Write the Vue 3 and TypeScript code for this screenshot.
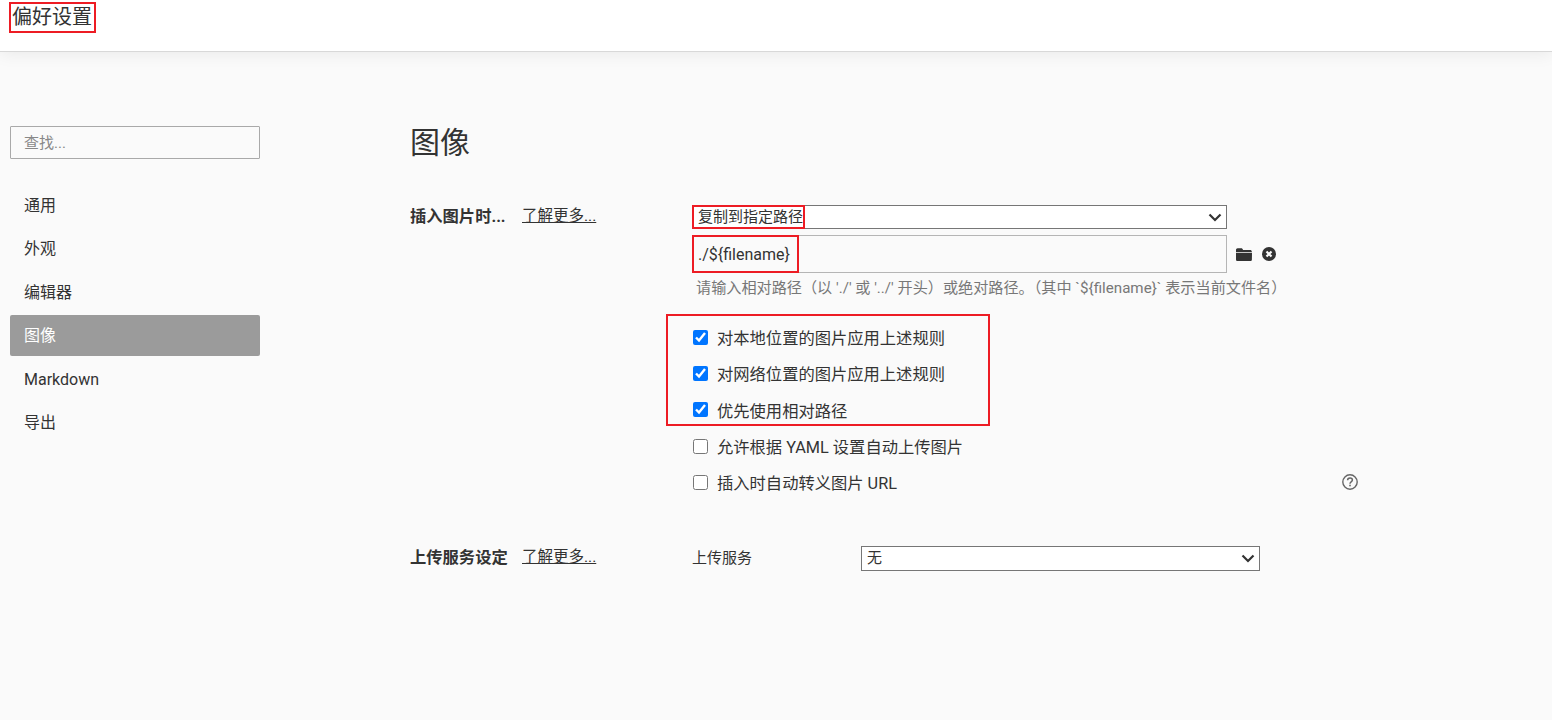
<template>
  <div class="page">
    <header class="topbar">
      <h1 class="title">偏好设置</h1>
    </header>
    <div class="content">
      <aside class="sidebar">
        <input class="search" type="text" placeholder="查找..." />
        <nav class="nav">
          <a v-for="item in navItems" :key="item" class="nav-item" :class="{ active: item === '图像' }">{{ item }}</a>
        </nav>
      </aside>
      <main class="main">
        <h2 class="heading">图像</h2>
        <section class="group first">
          <div class="group-label">
            <span class="label-text">插入图片时...</span>
            <a class="more">了解更多...</a>
          </div>
          <div class="group-body">
            <div class="marked-select">
              <select class="select path-select">
                <option>复制到指定路径</option>
              </select>
              <span class="mark mark-select"></span>
            </div>
            <div class="path-row">
              <div class="path-input-wrap">
                <input class="path-input" type="text" value="./${filename}" />
                <span class="mark mark-input"></span>
              </div>
              <svg class="icon-folder" viewBox="0 0 16 13" width="16" height="13">
                <path d="M0 2C0 1 .7.3 1.6.3h3.6c.8 0 1.2.5 1.5 1l.4.7h7.1c.9 0 1.6.7 1.6 1.6V4H0V2z" fill="#333" />
                <path d="M0 4.8h16l-.1 6.6c0 .9-.7 1.6-1.6 1.6H1.6C.7 13 0 12.3 0 11.4V4.8z" fill="#333" />
              </svg>
              <svg class="icon-clear" viewBox="0 0 14 14" width="14" height="14">
                <circle cx="7" cy="7" r="7" fill="#333" />
                <path d="M4.5 4.5l5 5M9.5 4.5l-5 5" stroke="#fafafa" stroke-width="2.2" fill="none" />
              </svg>
            </div>
            <p class="hint">请输入相对路径（以 './' 或 '../' 开头）或绝对路径。（其中 `${filename}` 表示当前文件名）</p>
            <div class="checks">
              <div class="checks-marked">
                <label v-for="c in markedChecks" :key="c" class="check">
                  <input type="checkbox" checked />
                  <span>{{ c }}</span>
                </label>
              </div>
              <label class="check plain">
                <input type="checkbox" />
                <span>允许根据 YAML 设置自动上传图片</span>
              </label>
              <label class="check plain">
                <input type="checkbox" />
                <span>插入时自动转义图片 URL</span>
                <svg class="icon-help" viewBox="0 0 16 16" width="16" height="16">
                  <circle cx="8" cy="8" r="7.2" fill="none" stroke="#666" stroke-width="1.4" />
                  <path d="M5.6 6.3c0-1.5 1.1-2.3 2.4-2.3s2.4.8 2.4 2.1c0 1.9-2.4 1.8-2.4 3.6" fill="none" stroke="#666" stroke-width="1.5" />
                  <rect x="7.2" y="10.7" width="1.6" height="1.6" fill="#666" />
                </svg>
              </label>
            </div>
          </div>
        </section>
        <section class="group second">
          <div class="group-label">
            <span class="label-text">上传服务设定</span>
            <a class="more">了解更多...</a>
          </div>
          <div class="service-row">
            <span class="service-label">上传服务</span>
            <select class="select service-select">
              <option>无</option>
            </select>
          </div>
        </section>
      </main>
    </div>
  </div>
</template>

<script setup lang="ts">
const navItems: string[] = ['通用', '外观', '编辑器', '图像', 'Markdown', '导出'];
const markedChecks: string[] = ['对本地位置的图片应用上述规则', '对网络位置的图片应用上述规则', '优先使用相对路径'];
</script>

<style>
html,
body {
  margin: 0;
  background: #fafafa;
}
</style>

<style scoped>
.page {
  height: 720px;
  overflow: hidden;
  background: #fafafa;
  color: #333;
  font-family: Roboto, "Noto Sans CJK SC", sans-serif;
  font-size: 16px;
}

.topbar {
  height: 52px;
  box-sizing: border-box;
  padding: 2px 0 0 9px;
  background: #fff;
  border-bottom: 1px solid #d8d8d8;
  box-shadow: 0 1px 18px rgba(0, 0, 0, 0.08);
  position: relative;
}

.title {
  display: inline-block;
  margin: 0;
  box-sizing: border-box;
  width: 87px;
  height: 31px;
  padding-left: 1px;
  border: 2px solid #ed1c24;
  font-size: 20px;
  font-weight: 400;
  line-height: 27px;
  white-space: nowrap;
}

.content {
  display: flex;
}

.sidebar {
  width: 250px;
  flex-shrink: 0;
  margin: 74px 0 0 10px;
}

.search {
  display: block;
  box-sizing: border-box;
  width: 250px;
  height: 33px;
  padding: 0 13px;
  background: #fafafa;
  border: 1px solid #a9a9a9;
  border-radius: 1px;
  outline: none;
  font: inherit;
  font-size: 15px;
}

.search::placeholder {
  color: #888;
}

.nav {
  display: flex;
  flex-direction: column;
  margin-top: 26px;
}

.nav-item {
  height: 41px;
  margin-bottom: 2.4px;
  padding-left: 14px;
  border-radius: 2px;
  line-height: 41px;
}

.nav-item.active {
  background: #9b9b9b;
  color: #fff;
}

.main {
  flex: 1;
  margin: 67px 0 0 150px;
}

.heading {
  margin: 0;
  height: 48px;
  font-size: 30px;
  font-weight: 400;
  line-height: 48px;
}

.group {
  display: flex;
}

.first {
  margin-top: 38px;
}

.second {
  margin-top: 45px;
}

.group-label {
  display: flex;
  width: 282px;
  flex-shrink: 0;
  line-height: 23px;
  white-space: nowrap;
}

.label-text {
  width: 112px;
  font-size: 16.3px;
  font-weight: 700;
}

.more {
  color: #333;
  font-size: 15.5px;
  text-decoration: underline;
}

.group-body {
  flex: 1;
}

.marked-select {
  position: relative;
  width: 535px;
}

.select {
  display: block;
  box-sizing: border-box;
  appearance: none;
  background: #fff url("data:image/svg+xml,%3Csvg xmlns='http://www.w3.org/2000/svg' width='14' height='9'%3E%3Cpath d='M1.5 1.5L7 7l5.5-5.5' fill='none' stroke='%23333' stroke-width='2.2'/%3E%3C/svg%3E") no-repeat right 4px center;
  border: 1px solid #767676;
  color: #333;
  font: inherit;
  font-size: 15px;
  padding: 0 0 0 5px;
  border-radius: 0;
}

.path-select {
  width: 535px;
  height: 24px;
}

.mark {
  position: absolute;
  left: 0;
  top: 0;
  box-sizing: border-box;
  border: 2px solid #ed1c24;
  pointer-events: none;
}

.mark-select {
  width: 113px;
  height: 24px;
}

.mark-input {
  width: 107px;
  height: 38px;
}

.path-row {
  display: flex;
  align-items: center;
  margin-top: 6px;
}

.path-input-wrap {
  position: relative;
  width: 535px;
}

.path-input {
  display: block;
  box-sizing: border-box;
  width: 535px;
  height: 38px;
  padding: 0 5px;
  background: #fafafa;
  border: 1px solid #b5b5b5;
  outline: none;
  color: #333;
  font: inherit;
}

.icon-folder {
  margin-left: 9px;
}

.icon-clear {
  margin-left: 10px;
}

.hint {
  margin: 5px 0 0 4px;
  color: #777;
  font-size: 15.15px;
  line-height: 20px;
  white-space: nowrap;
}

.checks {
  margin-top: 16px;
  width: 666px;
}

.checks-marked {
  box-sizing: border-box;
  width: 324px;
  height: 112px;
  margin: 0 0 2px -26px;
  padding: 3px 0 0 25px;
  border: 2px solid #ed1c24;
}

.check {
  display: flex;
  align-items: center;
  height: 36.3px;
  font-size: 16.3px;
  white-space: nowrap;
}

.check input {
  width: 15px;
  height: 15px;
  margin: 0 9px 0 0;
}

.plain {
  padding-left: 1px;
}

.icon-help {
  margin: 0 0 1px auto;
}

.service-row {
  display: flex;
  align-items: center;
  height: 25px;
}

.service-label {
  width: 169px;
  padding-bottom: 3px;
  font-size: 15px;
}

.service-select {
  width: 399px;
  height: 25px;
}
</style>
